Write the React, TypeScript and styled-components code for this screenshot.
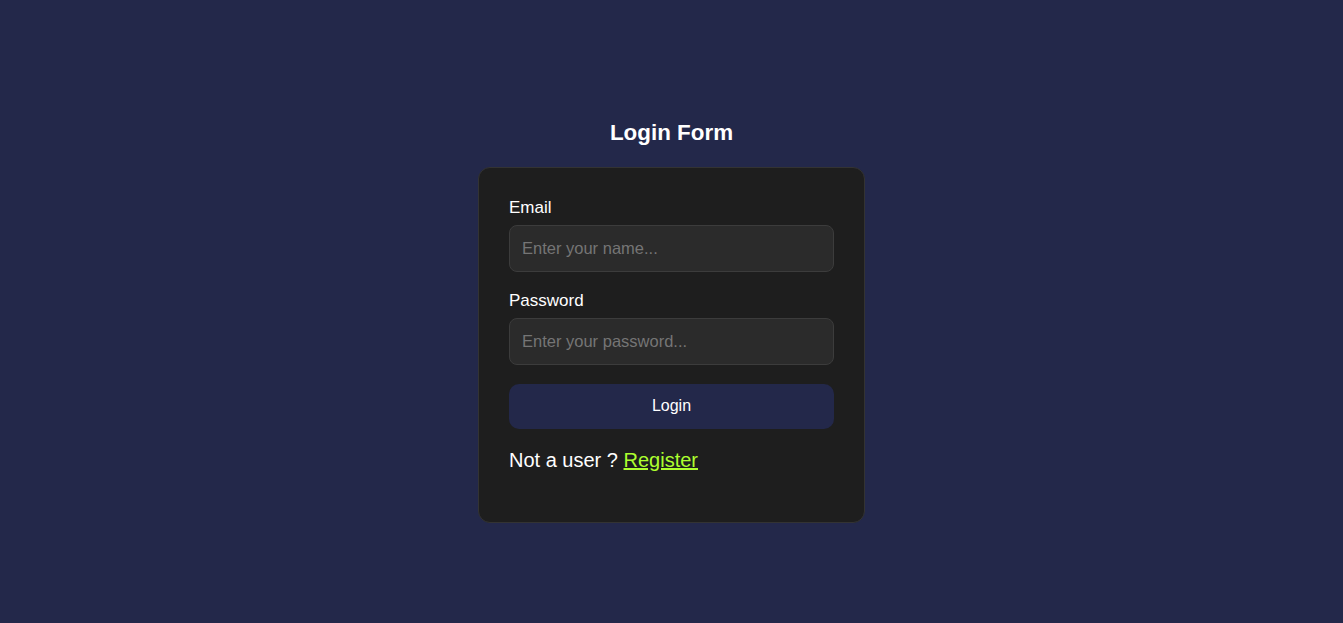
import React from "react";
import styled, { createGlobalStyle } from "styled-components";

const Global = createGlobalStyle`
  html, body { margin: 0; padding: 0; background: #23284a; }
  body { font-family: "Liberation Sans", Arial, sans-serif; color: #fff; }
  * { box-sizing: border-box; }
`;

const Page = styled.main`
  min-height: 623px;
  display: flex;
  flex-direction: column;
  align-items: center;
  padding-top: 120px;
`;

const Title = styled.h2`
  margin: 0 0 22px;
  font-size: 22.4px;
  font-weight: 700;
  line-height: 25px;
  color: #fff;
`;

const Card = styled.form`
  width: 387px;
  background: #1e1e1e;
  border: 1px solid #333;
  border-radius: 12px;
  padding: 30px 30px 50px;
  display: flex;
  flex-direction: column;
`;

const Label = styled.label`
  font-size: 17px;
  line-height: 20px;
  margin-bottom: 7px;
  color: #fff;
`;

const Input = styled.input`
  height: 46.6px;
  width: 100%;
  flex-shrink: 0;
  background: #2b2b2b;
  border: 1px solid #3c3c3c;
  border-radius: 8px;
  padding: 0 12px;
  font-family: "Liberation Sans", Arial, sans-serif;
  font-size: 16.5px;
  color: #fff;
  margin-bottom: 19.5px;
  outline: none;
  &::placeholder { color: #757575; }
`;

const Button = styled.button`
  height: 44.5px;
  width: 100%;
  flex-shrink: 0;
  background: #23284a;
  border: none;
  border-radius: 10px;
  color: #fff;
  font-family: "Liberation Sans", Arial, sans-serif;
  font-size: 16px;
  cursor: pointer;
`;

const Footer = styled.p`
  margin: 20.5px 0 0;
  font-size: 20px;
  line-height: 23px;
  color: #fff;
`;

const Link = styled.a`
  color: #adff2f;
  text-decoration: underline;
`;

export default function App() {
  return (
    <>
      <Global />
      <Page>
        <Title>Login Form</Title>
        <Card onSubmit={(e) => e.preventDefault()}>
          <Label htmlFor="email">Email</Label>
          <Input id="email" placeholder="Enter your name..." />
          <Label htmlFor="password">Password</Label>
          <Input id="password" type="password" placeholder="Enter your password..." />
          <Button type="submit">Login</Button>
          <Footer>
            Not a user ? <Link href="#">Register</Link>
          </Footer>
        </Card>
      </Page>
    </>
  );
}
